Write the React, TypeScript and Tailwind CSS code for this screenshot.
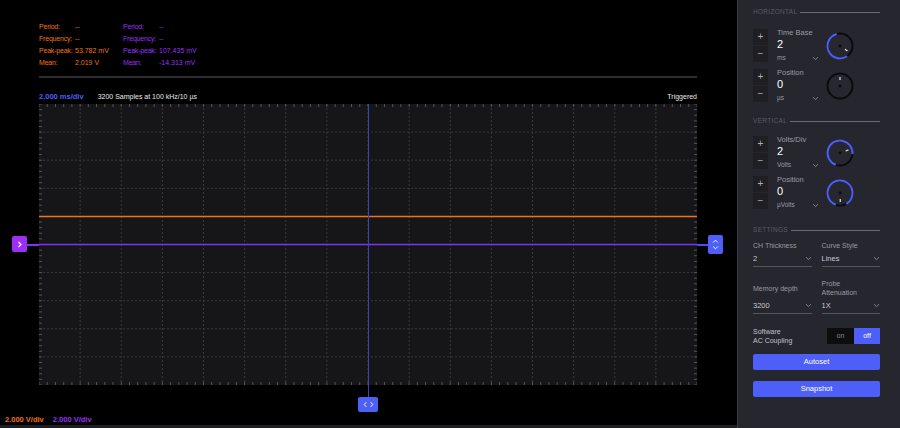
import React from "react";

const ORANGE = "#ee7512";
const PURPLE = "#9b2ff5";
const BLUE = "#4d5ff6";
const font = { fontFamily: '"Liberation Sans", Arial, sans-serif' };

function Grid() {
  const W = 658;
  const H = 281;
  const cols = 16;
  const rows = 10;
  const cw = W / cols;
  const rh = H / rows;
  const els: React.ReactNode[] = [];
  for (let i = 1; i < cols; i++) {
    els.push(
      <line key={"v" + i} x1={i * cw} y1={0} x2={i * cw} y2={H} stroke="#3a3a3e" strokeWidth={1} strokeDasharray="2 2" />
    );
  }
  for (let j = 1; j < rows; j++) {
    els.push(
      <line key={"h" + j} x1={0} y1={j * rh} x2={W} y2={j * rh} stroke="#3a3a3e" strokeWidth={1} strokeDasharray="2 2" />
    );
  }
  for (let k = 0; k <= cols * 5; k++) {
    const x = (k * cw) / 5;
    els.push(<line key={"tt" + k} x1={x} y1={0} x2={x} y2={3} stroke="#55555a" strokeWidth={1} />);
    els.push(<line key={"tb" + k} x1={x} y1={H - 3} x2={x} y2={H} stroke="#55555a" strokeWidth={1} />);
  }
  for (let k = 0; k <= rows * 5; k++) {
    const y = (k * rh) / 5;
    els.push(<line key={"tl" + k} x1={0} y1={y} x2={3} y2={y} stroke="#55555a" strokeWidth={1} />);
    els.push(<line key={"tr" + k} x1={W - 3} y1={y} x2={W} y2={y} stroke="#55555a" strokeWidth={1} />);
  }
  return (
    <svg width={W} height={H} className="block">
      <rect x={0} y={0} width={W} height={H} fill="#161618" />
      {els}
      <line x1={0} y1={112.5} x2={W} y2={112.5} stroke={ORANGE} strokeWidth={1.5} />
      <line x1={0} y1={140.5} x2={W} y2={140.5} stroke="#7a35f0" strokeWidth={1.5} />
      <line x1={329.5} y1={0} x2={329.5} y2={H} stroke="#3a44bd" strokeWidth={1} />
    </svg>
  );
}

function Measure({ color, rows }: { color: string; rows: [string, string][] }) {
  return (
    <div className="flex flex-col gap-[3px]" style={{ color }}>
      {rows.map(([k, v]) => (
        <div key={k} className="flex text-[7px] leading-[9px] whitespace-nowrap">
          <span className="w-[36px] tracking-[-0.2px]">{k}</span>
          <span>{v}</span>
        </div>
      ))}
    </div>
  );
}

function SectionTitle({ label }: { label: string }) {
  return (
    <div className="flex items-center gap-[3px] h-[7px]">
      <span className="text-[6.5px] tracking-[0.3px] text-[#5a5a64] leading-none">{label}</span>
      <div className="flex-1 h-[1px] bg-[#6a6a72]" />
    </div>
  );
}

function Chevron({ className = "" }: { className?: string }) {
  return (
    <svg width="7" height="5" viewBox="0 0 7 5" className={className}>
      <path d="M1 1.2 L3.5 3.6 L6 1.2" fill="none" stroke="#8a8a94" strokeWidth="0.9" />
    </svg>
  );
}

function Knob({ start, end, pointer }: { start: number; end: number; pointer: number }) {
  // angles in degrees, 0 = 12 o'clock, clockwise
  const r = 12.5;
  const cx = 15;
  const cy = 15;
  const pt = (a: number, rr: number) => {
    const rad = ((a - 90) * Math.PI) / 180;
    return [cx + rr * Math.cos(rad), cy + rr * Math.sin(rad)];
  };
  const sweep = (((end - start) % 360) + 360) % 360;
  const [x1, y1] = pt(start, r);
  const [x2, y2] = pt(end, r);
  const [p1x, p1y] = pt(pointer, 6);
  const [p2x, p2y] = pt(pointer, 9);
  return (
    <svg width="30" height="30" viewBox="0 0 30 30">
      <circle cx={cx} cy={cy} r={r} fill="#27272f" stroke="#0b0b0d" strokeWidth="2" />
      {sweep > 0 && (
        <path
          d={`M${x1} ${y1} A${r} ${r} 0 ${sweep > 180 ? 1 : 0} 1 ${x2} ${y2}`}
          fill="none"
          stroke={BLUE}
          strokeWidth="2"
        />
      )}
      <circle cx={cx} cy={cy} r="1.4" fill="#0b0b0d" />
      <line x1={p1x} y1={p1y} x2={p2x} y2={p2y} stroke="#e6e6ea" strokeWidth="1.2" />
    </svg>
  );
}

function Control({
  label,
  value,
  unit,
  knob,
}: {
  label: string;
  value: string;
  unit: string;
  knob: { start: number; end: number; pointer: number };
}) {
  return (
    <div className="flex items-center h-[33px]">
      <div className="flex flex-col gap-[1px] w-[15px]">
        <div className="h-[16px] bg-[#1e1e23] flex items-center justify-center text-[#b0b0b8] text-[10px] leading-none">+</div>
        <div className="h-[16px] bg-[#1e1e23] flex items-center justify-center text-[#b0b0b8] text-[10px] leading-none">−</div>
      </div>
      <div className="ml-[9px] w-[42px] h-full flex flex-col">
        <span className="text-[7.5px] leading-[8px] text-[#9a9aa4]">{label}</span>
        <span className="text-[11px] leading-[12px] text-white mt-[1px]">{value}</span>
        <div className="h-[1px] bg-[#4d5ff6] mt-[2px]" />
        <div className="flex items-center justify-between mt-[2px]">
          <span className="text-[6.5px] leading-[8px] text-[#9a9aa4]">{unit}</span>
          <Chevron />
        </div>
      </div>
      <div className="ml-[6px]">
        <Knob {...knob} />
      </div>
    </div>
  );
}

function SelectField({
  label,
  label2,
  value,
  labelH,
}: {
  label: string;
  label2?: string;
  value: string;
  labelH: string;
}) {
  return (
    <div className="flex flex-col flex-1">
      <div className={`${labelH} flex flex-col justify-center text-[7px] leading-[9px] text-[#9a9aa4]`}>
        <span>{label}</span>
        {label2 && <span>{label2}</span>}
      </div>
      <div className="flex items-center justify-between mt-[4px] h-[9px]">
        <span className="text-[7.5px] leading-[9px] text-[#c8c8d0]">{value}</span>
        <Chevron />
      </div>
      <div className="h-[1px] bg-[#55555e] mt-[3px]" />
    </div>
  );
}

export default function App() {
  return (
    <div className="w-[900px] h-[428px] flex bg-black overflow-hidden" style={font}>
      {/* scope display */}
      <div className="w-[737px] h-full flex flex-col relative">
        <div className="pl-[39px] pt-[22px] flex gap-[12px]">
          <div className="w-[72px]">
            <Measure
              color={ORANGE}
              rows={[
                ["Period:", "--"],
                ["Frequency:", "--"],
                ["Peak-peak:", "53.782 mV"],
                ["Mean:", "2.019 V"],
              ]}
            />
          </div>
          <Measure
            color={PURPLE}
            rows={[
              ["Period:", "--"],
              ["Frequency:", "--"],
              ["Peak-peak:", "107.435 mV"],
              ["Mean:", "-14.313 mV"],
            ]}
          />
        </div>
        <div className="ml-[39px] mr-[40px] mt-[9px] h-[2px] bg-[#2e2e32]" />
        <div className="ml-[39px] mr-[40px] mt-[14px] flex items-center text-[7px] leading-[9px]">
          <span className="font-bold text-[7.5px]" style={{ color: BLUE }}>2.000 ms/div</span>
          <span className="ml-[14px] text-[#e8e8ec]">3200 Samples at 100 kHz/10 µs</span>
          <span className="ml-auto text-[#e8e8ec]">Triggered</span>
        </div>
        <div className="ml-[39px] mt-[3px] relative w-[658px] h-[281px]">
          <Grid />
        </div>
        <div className="flex-1" />
        <div className="pl-[5px] pb-[1px] flex gap-[9px] text-[7.5px] leading-[9px] font-bold">
          <span style={{ color: ORANGE }}>2.000 V/div</span>
          <span style={{ color: PURPLE }}>2.000 V/div</span>
        </div>
        <div className="h-[3px] bg-[#1f1f23]" />

        {/* channel offset marker */}
        <div className="absolute left-[12px] top-[236px] w-[15px] h-[16px] rounded-[2px] bg-[#9b2ff5] flex items-center justify-center">
          <svg width="6" height="7" viewBox="0 0 6 7">
            <path d="M1.5 1 L4 3.5 L1.5 6" fill="none" stroke="#fff" strokeWidth="1.1" />
          </svg>
        </div>
        <div className="absolute left-[27px] top-[244px] w-[12px] h-[1.5px] bg-[#8a2ff2]" />

        {/* trigger level marker */}
        <div className="absolute left-[697px] top-[244px] w-[11px] h-[1.5px] bg-[#5a44f0]" />
        <div className="absolute left-[708px] top-[235px] w-[15px] h-[19px] rounded-[2px] bg-[#4d5ff6] flex items-center justify-center">
          <svg width="7" height="13" viewBox="0 0 7 13">
            <path d="M1.2 4.5 L3.5 2.2 L5.8 4.5" fill="none" stroke="#fff" strokeWidth="1" />
            <path d="M1.2 8.5 L3.5 10.8 L5.8 8.5" fill="none" stroke="#fff" strokeWidth="1" />
          </svg>
        </div>

        {/* time offset marker */}
        <div className="absolute left-[367.5px] top-[385px] w-[1px] h-[12px] bg-[#3a44bd]" />
        <div className="absolute left-[358px] top-[397px] w-[20px] h-[15px] rounded-[2px] bg-[#4d5ff6] flex items-center justify-center">
          <svg width="11" height="7" viewBox="0 0 11 7">
            <path d="M3.3 1.2 L1.2 3.5 L3.3 5.8" fill="none" stroke="#fff" strokeWidth="1" />
            <path d="M7.7 1.2 L9.8 3.5 L7.7 5.8" fill="none" stroke="#fff" strokeWidth="1" />
          </svg>
        </div>
      </div>

      {/* control panel */}
      <div className="w-[163px] h-full bg-[#26262e] border-l border-[#3a3a42] pl-[15px] pr-[20px] pt-[9px] flex flex-col">
        <SectionTitle label="HORIZONTAL" />
        <div className="mt-[13px] flex flex-col gap-[7px]">
          <Control label="Time Base" value="2" unit="ms" knob={{ start: 145, end: 345, pointer: 124 }} />
          <Control label="Position" value="0" unit="µs" knob={{ start: 0, end: 0, pointer: 0 }} />
        </div>
        <div className="mt-[16px]">
          <SectionTitle label="VERTICAL" />
        </div>
        <div className="mt-[11px] flex flex-col gap-[7px]">
          <Control label="Volts/Div" value="2" unit="Volts" knob={{ start: 200, end: 95, pointer: 70 }} />
          <Control label="Position" value="0" unit="µVolts" knob={{ start: 200, end: 150, pointer: 178 }} />
        </div>
        <div className="mt-[18px]">
          <SectionTitle label="SETTINGS" />
        </div>
        <div className="mt-[7px] flex gap-[10px]">
          <SelectField label="CH Thickness" value="2" labelH="h-[9px]" />
          <SelectField label="Curve Style" value="Lines" labelH="h-[9px]" />
        </div>
        <div className="mt-[12px] flex gap-[10px]">
          <SelectField label="Memory depth" value="3200" labelH="h-[18px]" />
          <SelectField label="Probe" label2="Attenuation" value="1X" labelH="h-[18px]" />
        </div>
        <div className="mt-[13px] flex items-center justify-between">
          <div className="text-[7px] leading-[9px] text-[#c0c0c8]">
            <div>Software</div>
            <div>AC Coupling</div>
          </div>
          <div className="flex h-[16px] text-[7px]">
            <div className="w-[27px] bg-[#0d0d10] text-[#8a8a92] flex items-center justify-center">on</div>
            <div className="w-[26px] bg-[#4d5ff6] text-white flex items-center justify-center">off</div>
          </div>
        </div>
        <button className="mt-[9px] h-[16px] rounded-[2px] bg-[#4d5ff6] text-white text-[7.5px] leading-none">Autoset</button>
        <button className="mt-[11px] h-[16px] rounded-[2px] bg-[#4d5ff6] text-white text-[7.5px] leading-none">Snapshot</button>
      </div>
    </div>
  );
}
